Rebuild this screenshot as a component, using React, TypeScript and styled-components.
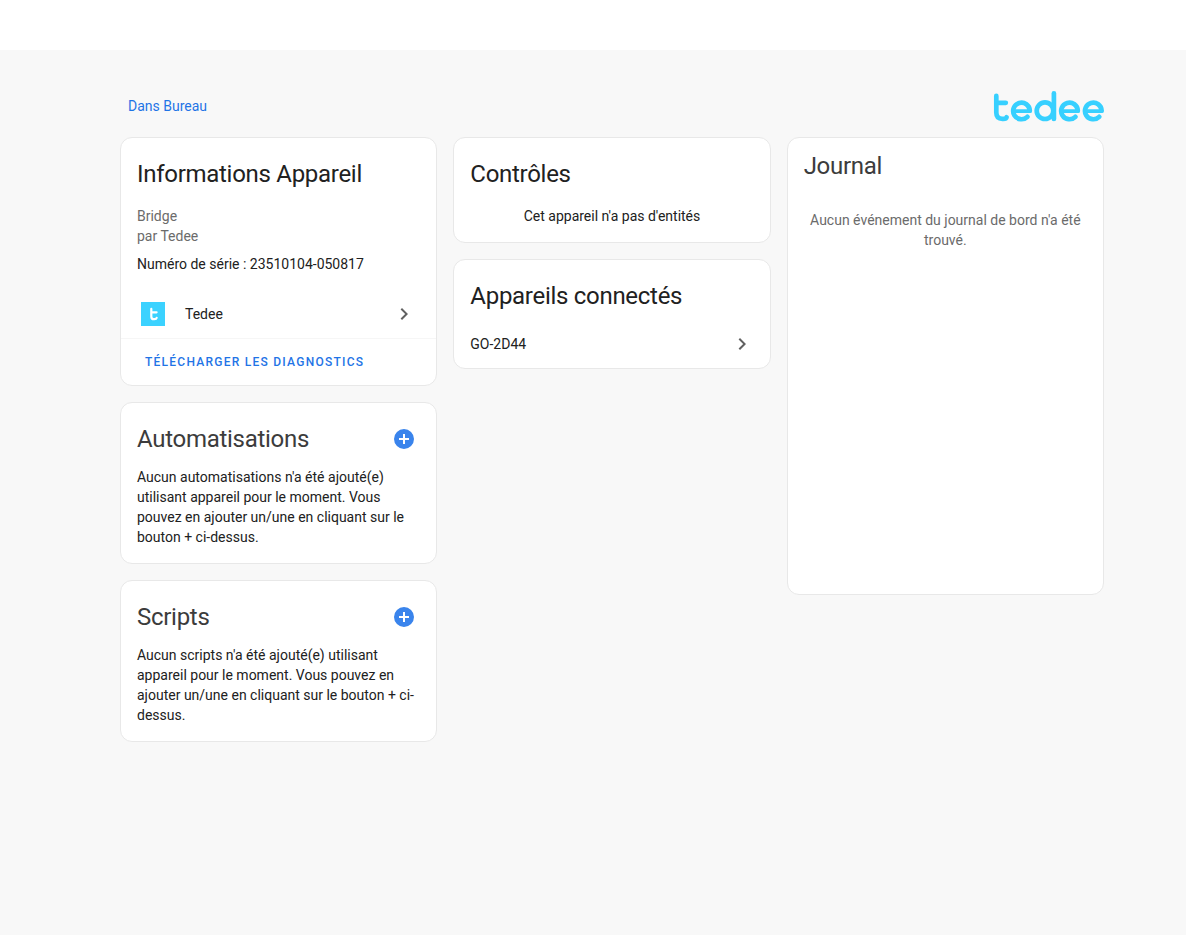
import React from "react";
import styled, { createGlobalStyle } from "styled-components";

const GlobalStyle = createGlobalStyle`
  *, *::before, *::after { box-sizing: border-box; }
  body {
    margin: 0;
    background: #f8f8f8;
    color: #212121;
    font-family: Roboto, "Noto Sans", sans-serif;
    font-size: 14px;
    line-height: 20px;
  }
`;

const TopBar = styled.header`
  height: 50px;
  background: #fff;
`;

const Page = styled.main`
  padding: 32px 16px 32px 54px;
`;

const Content = styled.div`
  max-width: 984px;
  margin: 0 auto;
`;

const Heading = styled.div`
  display: flex;
  align-items: center;
  justify-content: space-between;
  height: 48px;
  margin-bottom: 7px;
  padding-left: 8px;
`;

const AreaLink = styled.a`
  color: #1f74e6;
  text-decoration: none;
`;

const Columns = styled.div`
  display: grid;
  grid-template-columns: repeat(3, minmax(0, 1fr));
  align-items: start;
  gap: 16px;
`;

const Column = styled.div`
  display: flex;
  flex-direction: column;
  gap: 16px;
`;

const Card = styled.section<{ $minHeight?: number }>`
  background: #fff;
  border: 1px solid #e8e8e8;
  border-radius: 12px;
  min-height: ${(p) => p.$minHeight ?? 0}px;
`;

const CardHeader = styled.div<{ $top?: number; $bottom?: number }>`
  display: flex;
  align-items: center;
  justify-content: space-between;
  padding: ${(p) => p.$top ?? 12}px 8px ${(p) => p.$bottom ?? 0}px 16px;
`;

const Title = styled.h1<{ $soft?: boolean }>`
  margin: 0;
  color: ${(p) => (p.$soft ? "#3c3c3c" : "#212121")};
  font-size: 24px;
  font-weight: 400;
  line-height: 48px;
  letter-spacing: -0.012em;
`;

const Body = styled.div<{ $center?: boolean }>`
  padding: 0 16px 16px;
  text-align: ${(p) => (p.$center ? "center" : "left")};
`;

const Details = styled.div`
  padding: 0 16px 16px;
`;

const Secondary = styled.div`
  color: #6b6b6b;
`;

const Serial = styled.div`
  margin-top: 8px;
`;

const EmptyLog = styled.p`
  margin: 0;
  padding: 20px 16px;
  color: #6b6b6b;
  text-align: center;
`;

const RowLink = styled.a<{ $inset: number }>`
  display: flex;
  align-items: center;
  gap: 20px;
  height: 48px;
  padding: 0 ${(p) => p.$inset}px;
  color: inherit;
  text-decoration: none;
`;

const RowLabel = styled.span`
  flex: 1;
`;

const Actions = styled.div`
  border-top: 1px solid #f6f6f6;
  padding: 5px 16px;
`;

const TextButton = styled.button`
  height: 36px;
  padding: 0 8px;
  border: 0;
  background: none;
  color: #1f74e6;
  font-family: inherit;
  font-size: 12px;
  font-weight: 500;
  letter-spacing: 0.104em;
  text-transform: uppercase;
  cursor: pointer;
`;

const IconButton = styled.button`
  display: flex;
  align-items: center;
  justify-content: center;
  width: 48px;
  height: 48px;
  padding: 0;
  border: 0;
  background: none;
  color: #3a84ec;
  cursor: pointer;
`;

const Chevron = () => (
  <svg width="24" height="24" viewBox="0 0 24 24" fill="#616161" aria-hidden="true">
    <path d="M8.59,16.58L13.17,12L8.59,7.41L10,6L16,12L10,18L8.59,16.58Z" />
  </svg>
);

const PlusCircle = () => (
  <svg width="24" height="24" viewBox="0 0 24 24" fill="currentColor" aria-hidden="true">
    <path d="M17,13H13V17H11V13H7V11H11V7H13V11H17M12,2A10,10 0 0,0 2,12A10,10 0 0,0 12,22A10,10 0 0,0 22,12A10,10 0 0,0 12,2Z" />
  </svg>
);

const TedeeIcon = () => (
  <svg width="24" height="24" viewBox="0 0 24 24" aria-hidden="true">
    <rect width="24" height="24" fill="#3bd2ff" />
    <path
      d="M10.3 6.9V14.4Q10.3 17.2 12.9 17.2H13.4Q15.4 17.2 15.7 15.8M10.3 10.3H15.6"
      fill="none"
      stroke="#fff"
      strokeWidth="2.2"
      strokeLinecap="round"
    />
  </svg>
);

const TedeeLogo = () => (
  <svg width="112" height="32" viewBox="0 0 112 32" role="img" aria-label="tedee">
    <g fill="none" stroke="#37d0ff" strokeWidth="4.7" strokeLinecap="round" strokeLinejoin="round">
      <path d="M4.3 5.9V22.6Q4.3 28.9 10.4 28.9H11.2Q14.2 28.9 14.6 27.2M4.3 12.8H13.8" />
      <circle cx="53" cy="20.7" r="8.3" />
      <path d="M61.9 3.4V28.9" />
      <path d="M35.4 26.8A8.3 8.3 0 1 1 37.8 20.7" />
      <path d="M83.4 26.8A8.3 8.3 0 1 1 85.8 20.7" />
      <path d="M107.2 26.8A8.3 8.3 0 1 1 109.6 20.7" />
    </g>
    <g fill="none" stroke="#37d0ff" strokeWidth="3.8" strokeLinecap="round">
      <path d="M22 21.1H38" />
      <path d="M70 21.1H86" />
      <path d="M93.8 21.1H109.8" />
    </g>
  </svg>
);

const HelperCard = ({ title, children }: { title: string; children: React.ReactNode }) => (
  <Card>
    <CardHeader $bottom={4}>
      <Title $soft>{title}</Title>
      <IconButton type="button" aria-label={`Ajouter : ${title}`}>
        <PlusCircle />
      </IconButton>
    </CardHeader>
    <Body>{children}</Body>
  </Card>
);

export default function App() {
  return (
    <>
      <GlobalStyle />
      <TopBar />
      <Page>
        <Content>
          <Heading>
            <AreaLink href="#bureau">Dans Bureau</AreaLink>
            <TedeeLogo />
          </Heading>
          <Columns>
            <Column>
              <Card>
                <CardHeader $bottom={8}>
                  <Title>Informations Appareil</Title>
                </CardHeader>
                <Details>
                  <Secondary>Bridge</Secondary>
                  <Secondary>par Tedee</Secondary>
                  <Serial>Numéro de série : 23510104-050817</Serial>
                </Details>
                <RowLink href="#tedee" $inset={20}>
                  <TedeeIcon />
                  <RowLabel>Tedee</RowLabel>
                  <Chevron />
                </RowLink>
                <Actions>
                  <TextButton type="button">Télécharger les diagnostics</TextButton>
                </Actions>
              </Card>
              <HelperCard title="Automatisations">
                Aucun automatisations n'a été ajouté(e) utilisant appareil pour le moment. Vous
                pouvez en ajouter un/une en cliquant sur le bouton + ci-dessus.
              </HelperCard>
              <HelperCard title="Scripts">
                Aucun scripts n'a été ajouté(e) utilisant appareil pour le moment. Vous pouvez en
                ajouter un/une en cliquant sur le bouton + ci-dessus.
              </HelperCard>
            </Column>
            <Column>
              <Card>
                <CardHeader $bottom={8}>
                  <Title>Contrôles</Title>
                </CardHeader>
                <Body $center>Cet appareil n'a pas d'entités</Body>
              </Card>
              <Card>
                <CardHeader>
                  <Title>Appareils connectés</Title>
                </CardHeader>
                <RowLink href="#go-2d44" $inset={16}>
                  <RowLabel>GO-2D44</RowLabel>
                  <Chevron />
                </RowLink>
              </Card>
            </Column>
            <Column>
              <Card $minHeight={458}>
                <CardHeader $top={4}>
                  <Title $soft>Journal</Title>
                </CardHeader>
                <EmptyLog>Aucun événement du journal de bord n'a été trouvé.</EmptyLog>
              </Card>
            </Column>
          </Columns>
        </Content>
      </Page>
    </>
  );
}
